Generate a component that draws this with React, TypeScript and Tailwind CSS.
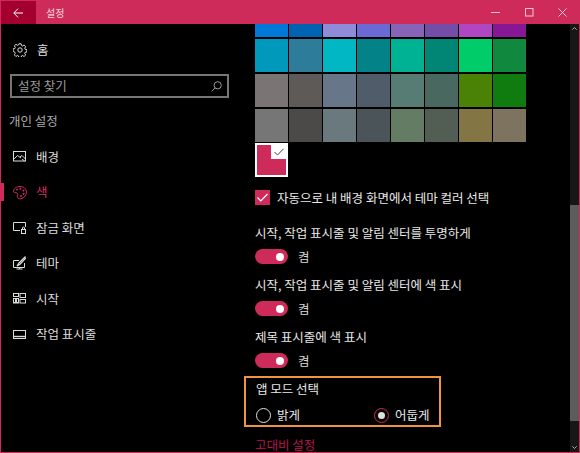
import React from "react";

const swatches = [
  ["#0078d7", "#0063b1", "#8e8cd8", "#6b69d6", "#8764b8", "#744da9", "#b146c2", "#881798"],
  ["#0099bc", "#2d7d9a", "#00b7c3", "#038387", "#00b294", "#018574", "#00cc6a", "#10893e"],
  ["#7a7574", "#5d5a58", "#68768a", "#515c6b", "#567c73", "#486860", "#498205", "#107c10"],
  ["#767676", "#4c4a48", "#69797e", "#4a5459", "#647c64", "#525e54", "#847545", "#7e735f"],
];

const Gear = () => (
  <svg width="14" height="14" viewBox="0 0 14 14" fill="none" stroke="currentColor" strokeWidth="1">
    <path d="M5.8.8h2.4l.3 1.7 1.1.5 1.5-1 1.6 1.7-1 1.4.5 1.2 1.7.3v2.4l-1.7.3-.5 1.1 1 1.5-1.7 1.6-1.4-1-1.2.5-.3 1.7H5.8l-.3-1.7-1.1-.5-1.5 1-1.6-1.7 1-1.4-.5-1.2L.1 8.2V5.8l1.7-.3.5-1.1-1-1.5L3 1.3l1.4 1 1.2-.5z" />
    <circle cx="7" cy="7" r="2.2" />
  </svg>
);
const Pic = () => (
  <svg width="13" height="11" viewBox="0 0 13 11" fill="none" stroke="currentColor" strokeWidth="1">
    <rect x=".5" y=".5" width="12" height="9.5" />
    <path d="M1 8l3.5-3.5L8 7M7 6l2-1.5L12.5 8M9 8l2.5 2" />
  </svg>
);
const Palette = () => (
  <svg width="14" height="15" viewBox="0 0 14 15" fill="none" stroke="currentColor" strokeWidth="1">
    <path d="M7 1.5C3.5 1.5.5 3.7.5 6.4c0 1.3 1.6 1.1 2.7 1.3 1.6.3 1.7 1.4 1.2 2.8-.5 1.5 0 3 2 3.2 3.5.4 7-2.9 7-6.6 0-3.3-2.9-5.6-6.4-5.6z" />
    <circle cx="4" cy="4.6" r=".6" fill="currentColor" />
    <circle cx="7.4" cy="3.8" r=".6" fill="currentColor" />
    <circle cx="10.4" cy="5.6" r=".6" fill="currentColor" />
    <circle cx="10.6" cy="8.8" r=".6" fill="currentColor" />
    <circle cx="8" cy="11" r=".6" fill="currentColor" />
  </svg>
);
const LockScreen = () => (
  <svg width="13" height="12" viewBox="0 0 13 12" fill="none" stroke="currentColor" strokeWidth="1">
    <path d="M7 8.5H.5V.5h12V5" />
    <rect x="8.5" y="7.5" width="4" height="4" />
    <path d="M9.5 7.5V6a1 1 0 0 1 2 0v1.5" />
  </svg>
);
const Theme = () => (
  <svg width="13" height="14" viewBox="0 0 13 14" fill="none" stroke="currentColor" strokeWidth="1">
    <path d="M6 4.5H.5v7h11V7" />
    <path d="M3.5 13h6M6.5 11.5V13" />
    <path d="M12.5.5L6 7 4 10l3-1.8L13 2" strokeWidth="1.2" />
  </svg>
);
const Start = () => (
  <svg width="13" height="11" viewBox="0 0 13 11" fill="none" stroke="currentColor" strokeWidth="1">
    <rect x=".5" y=".5" width="5" height="3" />
    <rect x="7" y=".5" width="5.5" height="4" />
    <rect x=".5" y="5.5" width="2" height="4.5" />
    <rect x="3.5" y="5.5" width="2" height="4.5" />
    <rect x="7" y="6.5" width="5.5" height="3.5" />
  </svg>
);
const Taskbar = () => (
  <svg width="13" height="9" viewBox="0 0 13 9" fill="none" stroke="currentColor" strokeWidth="1">
    <rect x=".5" y=".5" width="12" height="8" />
    <path d="M1 6.5h11" strokeWidth="1.4" />
  </svg>
);

const navItems: { label: string; icon: React.ReactNode; active?: boolean }[] = [
  { label: "배경", icon: <Pic /> },
  { label: "색", icon: <Palette />, active: true },
  { label: "잠금 화면", icon: <LockScreen /> },
  { label: "테마", icon: <Theme /> },
  { label: "시작", icon: <Start /> },
  { label: "작업 표시줄", icon: <Taskbar /> },
];

const ToggleRow = ({ label }: { label: string }) => (
  <div className="flex flex-col">
    <div className="h-[18px] text-[12.5px] leading-[18px] text-[#e8e8e8]">{label}</div>
    <div className="mt-[7px] flex h-[15px] items-center">
      <div className="flex h-[15px] w-[33px] items-center justify-end rounded-full bg-[#ce2a5a] pr-[4px]">
        <div className="h-[8px] w-[8px] rounded-full bg-white" />
      </div>
      <span className="ml-[10px] text-[12.5px] leading-[15px] text-[#d8d8d8]">켬</span>
    </div>
  </div>
);

export default function App() {
  return (
    <div
      className="flex h-[453px] w-[580px] flex-col overflow-hidden border border-[#ce2a5a] bg-black"
      style={{ fontFamily: '"Noto Sans CJK KR", "Noto Sans", sans-serif' }}
    >
      <header className="flex h-[23px] shrink-0 items-center bg-[#ce2a5a] text-white">
        <div className="flex h-[23px] w-[35px] items-center justify-center bg-[#a3002f]">
          <svg width="11" height="10" viewBox="0 0 11 10" fill="none" stroke="currentColor" strokeWidth="1">
            <path d="M5 .7L.8 5 5 9.3M.8 5H10" />
          </svg>
        </div>
        <span className="ml-[10px] text-[10px] leading-none text-[#f6d5de]">설정</span>
        <div className="ml-auto flex h-[23px] items-center">
          <div className="flex w-[34px] justify-center">
            <svg width="9" height="9" viewBox="0 0 9 9" stroke="#f4c9d5" strokeWidth="1"><path d="M0 4.5h9" /></svg>
          </div>
          <div className="flex w-[34px] justify-center">
            <svg width="9" height="9" viewBox="0 0 9 9" fill="none" stroke="#f4c9d5" strokeWidth="1"><rect x=".5" y=".5" width="7.5" height="7.5" /></svg>
          </div>
          <div className="flex w-[33px] justify-center">
            <svg width="9" height="9" viewBox="0 0 9 9" stroke="#f4c9d5" strokeWidth="1"><path d="M.5.5l8 8M8.5.5l-8 8" /></svg>
          </div>
        </div>
      </header>

      <main className="flex min-h-0 flex-1">
        <aside className="w-[239px] shrink-0 pt-[17px] text-[#e0e0e0]">
          <div className="flex h-[18px] items-center pl-[12px]">
            <Gear />
            <span className="ml-[10px] text-[12.5px] leading-[18px]">홈</span>
          </div>
          <div className="ml-[9px] mt-[15px] flex h-[24px] w-[219px] items-center justify-between border-2 border-[#767676] pl-[6px] pr-[5px]">
            <span className="text-[12.5px] leading-none text-[#9a9a9a]">설정 찾기</span>
            <svg width="11" height="11" viewBox="0 0 11 11" fill="none" stroke="#9a9a9a" strokeWidth="1">
              <circle cx="6.7" cy="4.3" r="3.6" />
              <path d="M4 7L.7 10.4" />
            </svg>
          </div>
          <div className="ml-[8px] mt-[14px] h-[18px] text-[12.5px] leading-[18px] text-[#a8a8a8]">개인 설정</div>
          <nav className="mt-[9px] flex flex-col">
            {navItems.map((item) => (
              <div
                key={item.label}
                className={
                  item.active
                    ? "relative flex h-[35.5px] items-center text-[#d92c64]"
                    : "relative flex h-[35.5px] items-center text-[#dcdcdc]"
                }
              >
                {item.active && <div className="absolute left-0 top-[8px] h-[18px] w-[3px] bg-[#ce2a5a]" />}
                <div className="flex w-[35px] justify-center pl-[2px]">{item.icon}</div>
                <span className="text-[12.5px] leading-[18px]">{item.label}</span>
              </div>
            ))}
          </nav>
        </aside>

        <section className="flex min-w-0 flex-1 flex-col overflow-hidden">
          <div className="ml-[15px] flex w-[271px] flex-col gap-y-[2px]">
            {swatches.map((row, i) => (
              <div key={i} className={i === 0 ? "flex h-[13px] gap-x-px" : "flex h-[33px] gap-x-px"}>
                {row.map((c) => (
                  <div key={c} className="h-full w-[33px]" style={{ backgroundColor: c }} />
                ))}
              </div>
            ))}
            <div className="-mt-[1px] flex h-[34px] w-[33px] justify-end border-2 border-white bg-[#ce2a5a]">
              <div className="flex h-[14px] w-[15px] items-center justify-center bg-white">
                <svg width="10" height="8" viewBox="0 0 10 8" fill="none" stroke="#444" strokeWidth="1">
                  <path d="M.5 4l3 3L9.5.8" />
                </svg>
              </div>
            </div>
          </div>

          <div className="ml-[15px] mt-[13px] flex h-[15px] items-center">
            <div className="flex h-[15px] w-[15px] items-center justify-center bg-[#ce2a5a]">
              <svg width="11" height="9" viewBox="0 0 11 9" fill="none" stroke="#fff" strokeWidth="1.2">
                <path d="M.5 4.5l3.3 3.3L10.5 1" />
              </svg>
            </div>
            <span className="ml-[7px] text-[12.5px] leading-[15px] text-[#e8e8e8]">자동으로 내 배경 화면에서 테마 컬러 선택</span>
          </div>

          <div className="ml-[15px] mt-[19px] flex flex-col gap-y-[12px]">
            <ToggleRow label="시작, 작업 표시줄 및 알림 센터를 투명하게" />
            <ToggleRow label="시작, 작업 표시줄 및 알림 센터에 색 표시" />
            <ToggleRow label="제목 표시줄에 색 표시" />
          </div>

          <div className="ml-[4px] mt-[8px] h-[51px] w-[197px] shrink-0 border-2 border-[#ef9440] pl-[10px] pt-[2px]">
            <div className="h-[18px] text-[12.5px] leading-[18px] text-[#e8e8e8]">앱 모드 선택</div>
            <div className="mt-[9px] flex h-[16px] items-center">
              <div className="h-[15px] w-[15px] rounded-full border-[1.5px] border-[#e0e0e0]" />
              <span className="ml-[6px] w-[97px] text-[12.5px] leading-[16px] text-[#e8e8e8]">밝게</span>
              <div className="flex h-[15px] w-[15px] items-center justify-center rounded-full border-[1.5px] border-[#ce2a5a]">
                <div className="h-[7px] w-[7px] rounded-full bg-[#e0e0e0]" />
              </div>
              <span className="ml-[6px] text-[12.5px] leading-[16px] text-[#e8e8e8]">어둡게</span>
            </div>
          </div>

          <div className="ml-[15px] mt-[11px] text-[12.5px] leading-[14px] text-[#b8134f]">고대비 설정</div>
        </section>

        <div className="flex w-[9px] shrink-0 flex-col bg-[#171717]">
          <div className="flex h-[181px] justify-center pt-[3px]">
            <svg width="5" height="3" viewBox="0 0 5 3" fill="none" stroke="#aaa" strokeWidth="1"><path d="M.3 2.7L2.5.5l2.2 2.2" /></svg>
          </div>
          <div className="h-[216px] bg-[#5c5c5c]" />
          <div className="mt-auto flex justify-center pb-[3px]">
            <svg width="5" height="3" viewBox="0 0 5 3" fill="none" stroke="#aaa" strokeWidth="1"><path d="M.3.3L2.5 2.5 4.7.3" /></svg>
          </div>
        </div>
      </main>
    </div>
  );
}
